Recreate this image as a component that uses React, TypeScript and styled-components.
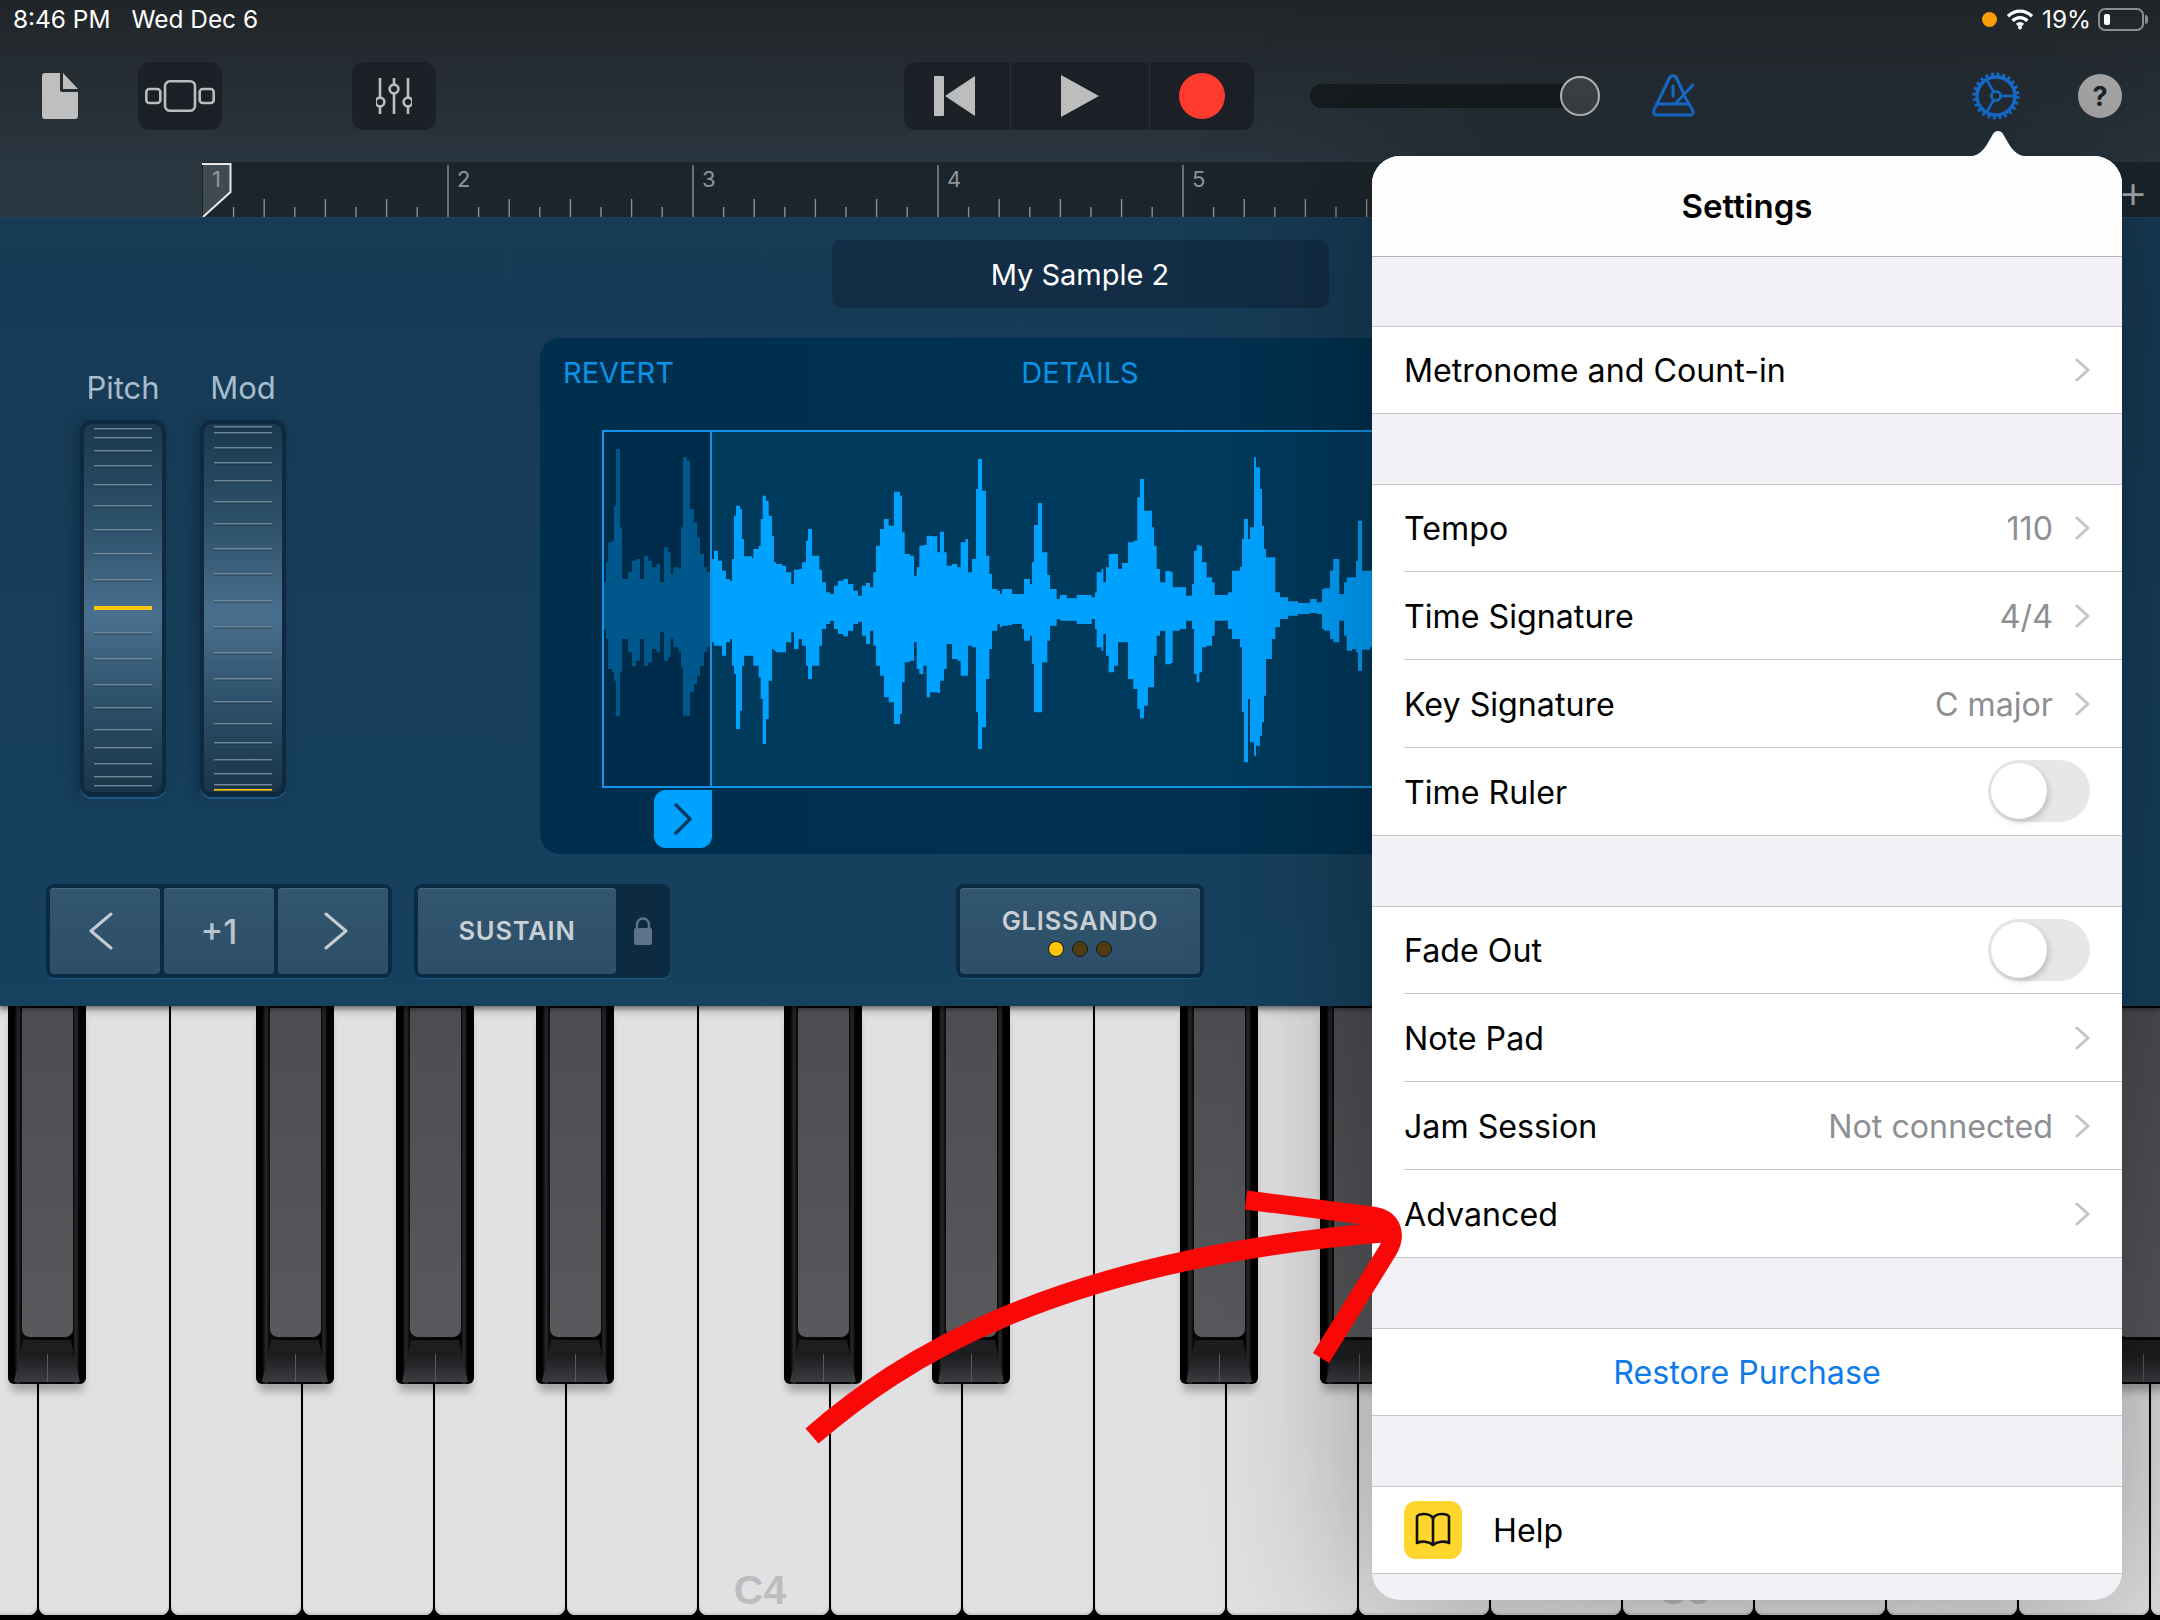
import React from 'react';
import styled, { createGlobalStyle } from 'styled-components';

const SF = `Inter, "Liberation Sans", sans-serif`;

const GlobalStyle = createGlobalStyle`
  html, body { margin: 0; padding: 0; background: #000; }
  body { font-family: ${SF}; }
  * { box-sizing: border-box; }
`;

/* ---------- data ---------- */

// wave outline traced from the screenshot: x, top, bottom (3 units per pixel)
const WAVE: [number, number, number][] = [
  [12,430,570],[18,370,600],[24,310,690],[36,305,700],[42,200,725],[48,30,832],[60,265,700],[66,420,600],[84,400,640],[96,365,682],
  [108,360,665],[120,420,600],[132,350,680],[144,365,670],[156,385,630],[170,375,640],[180,430,580],[192,325,665],[204,340,655],[212,405,600],
  [220,385,625],[236,388,640],[243,265,685],[249,55,830],[261,65,830],[270,210,760],[282,250,735],[291,295,710],[300,345,680],[312,385,640],
  [320,398,625],[330,398,610],[336,360,610],[342,335,620],[354,365,620],[366,395,650],[378,420,610],[390,425,600],[396,360,680],[402,230,705],
  [408,200,870],[420,210,815],[426,300,680],[432,352,650],[456,358,650],[460,330,680],[476,320,715],[482,240,780],[488,170,915],[498,185,840],
  [506,230,725],[516,290,630],[522,370,635],[528,375,640],[546,380,640],[558,400,610],[574,435,580],[582,392,630],[596,390,600],[606,370,620],
  [618,305,680],[624,270,720],[636,350,680],[642,350,680],[658,392,620],[666,430,570],[678,460,555],[690,465,545],[702,440,570],[714,425,585],
  [730,420,592],[744,435,575],[760,455,555],[774,470,548],[786,440,590],[798,432,615],[810,445,575],[820,400,620],[828,320,680],[840,270,710],
  [852,240,775],[866,260,790],[882,158,855],[900,170,825],[906,280,730],[914,345,670],[930,350,665],[942,410,610],[950,385,690],[958,320,705],
  [970,318,680],[980,290,775],[990,292,760],[1012,340,762],[1020,278,725],[1032,340,690],[1040,380,615],[1056,375,660],[1072,385,665],[1082,310,710],
  [1096,300,710],[1104,400,620],[1116,360,625],[1128,150,820],[1134,60,930],[1146,155,865],[1158,350,720],[1168,405,630],[1176,450,575],[1192,455,555],
  [1200,465,565],[1206,450,560],[1224,450,558],[1236,465,555],[1266,465,570],[1272,420,605],[1290,435,590],[1296,370,675],[1302,258,820],[1314,192,820],
  [1326,340,670],[1342,408,605],[1350,450,560],[1370,480,540],[1380,468,545],[1400,478,545],[1430,468,555],[1475,475,540],[1485,460,570],[1490,400,625],
  [1504,390,635],[1510,430,585],[1518,385,650],[1526,345,700],[1542,345,680],[1554,390,610],[1566,372,610],[1584,310,720],[1600,305,750],[1612,175,810],
  [1620,120,838],[1632,215,800],[1644,215,745],[1656,265,745],[1662,320,650],[1670,390,590],[1680,430,575],[1696,396,676],[1712,400,672],[1718,445,575],
  [1740,445,570],[1758,470,545],[1776,435,570],[1782,335,705],[1790,318,730],[1798,320,700],[1806,370,625],[1820,415,620],[1836,430,590],[1844,468,545],
  [1866,468,545],[1884,460,570],[1896,395,600],[1920,383,625],[1926,300,820],[1932,240,970],[1944,300,780],[1950,265,910],[1962,55,950],[1968,85,920],
  [1980,150,890],[1986,260,850],[1992,330,770],[1998,355,660],[2016,355,600],[2026,460,565],[2040,475,540],[2064,487,530],[2094,492,525],[2130,480,522],
  [2150,490,525],[2166,450,570],[2172,448,575],[2190,395,600],[2200,360,610],[2212,360,610],[2218,465,545],[2232,430,590],[2240,415,635],[2256,415,630],
  [2268,365,640],[2274,245,695],[2286,395,632],[2310,395,625],[2316,395,625],
];

const PITCH_TICKS = [9, 18, 31, 46, 65, 86, 110, 134, 160, 213, 239, 265, 288, 310, 328, 344, 357, 366];
const MOD_TICKS = [7, 13, 28, 43, 61, 82, 104, 129, 154, 181, 207, 233, 259, 282, 304, 323, 340, 354, 365];

const WHITE_KEYS = Array.from({ length: 18 }, (_, i) => i);
const KEY_LABELS: Record<number, string> = { 6: 'C4', 13: 'C5' };
const BLACK_KEYS = [8, 256, 396, 536, 784, 932, 1180, 1320, 1460, 1708, 1856, 2104];

const BARS = ['1', '2', '3', '4', '5', ''];
const BAR_TICKS = [1, 2, 3, 4, 5, 6, 7];

const wavePath = (from: number, to: number) =>
  WAVE.slice(0, -1)
    .map(([x, top, bottom], i) => {
      const next = WAVE[i + 1][0];
      if (next <= from || x >= to) return '';
      const x0 = Math.max(x, from) / 3 - 4;
      const x1 = Math.min(next, to) / 3 - 4;
      return `M${x0} ${top / 3 + 7}H${x1}V${bottom / 3 + 7}H${x0}Z`;
    })
    .join('');

/* ---------- page frame ---------- */

const Page = styled.div`
  position: relative;
  width: 2160px;
  height: 1620px;
  overflow: hidden;
  background: #000;
`;

const Header = styled.header`
  height: 162px;
  background: linear-gradient(#212528, #29353f);
`;

const StatusBar = styled.div`
  height: 38px;
  padding: 0 16px 0 13px;
  display: flex;
  align-items: center;
  color: #fff;
  font-size: 24.4px;
  font-weight: 400;
`;

const StatusDate = styled.span`
  margin-left: 21px;
`;

const StatusRight = styled.div`
  margin-left: auto;
  display: flex;
  align-items: center;
`;

const OrangeDot = styled.span`
  width: 15px;
  height: 15px;
  border-radius: 50%;
  background: #ff9f0a;
  margin-right: 9px;
`;

const BatteryPct = styled.span`
  margin: 0 7px 0 8px;
`;

const Battery = styled.span`
  position: relative;
  width: 46px;
  height: 23px;
  padding: 4px;
  border: 2px solid #8b8f92;
  border-radius: 7px;
  display: block;

  &::before {
    content: '';
    display: block;
    width: 6px;
    height: 100%;
    border-radius: 2px;
    background: #fff;
  }
  &::after {
    content: '';
    position: absolute;
    right: -6px;
    top: 5px;
    width: 3px;
    height: 9px;
    border-radius: 0 3px 3px 0;
    background: #8b8f92;
  }
`;

/* ---------- toolbar ---------- */

const Toolbar = styled.div`
  margin-top: 24px;
  height: 68px;
  padding-left: 42px;
  display: flex;
  align-items: center;
`;

const ToolButton = styled.div<{ $ml: number }>`
  width: 84px;
  height: 68px;
  margin-left: ${p => p.$ml}px;
  border-radius: 12px;
  background: #1b2126;
  display: flex;
  align-items: center;
  justify-content: center;
`;

const Transport = styled.div`
  margin-left: 468px;
  height: 68px;
  border-radius: 12px;
  background: #1b2126;
  display: flex;
`;

const TransportCell = styled.div<{ $w: number; $pr?: number }>`
  width: ${p => p.$w}px;
  padding-right: ${p => p.$pr ?? 0}px;
  display: flex;
  align-items: center;
  justify-content: center;
  & + & {
    border-left: 1px solid #2b3137;
  }
`;

const RecordDot = styled.span`
  width: 46px;
  height: 46px;
  border-radius: 50%;
  background: #ff3b30;
`;

const Volume = styled.div`
  margin-left: 56px;
  display: flex;
  align-items: center;
`;

const VolumeTrack = styled.div`
  width: 265px;
  height: 24px;
  border-radius: 12px 0 0 12px;
  background: #151b1e;
`;

const VolumeKnob = styled.div`
  width: 40px;
  height: 40px;
  margin-left: -15px;
  border-radius: 50%;
  border: 2px solid #bdbfc0;
  background: #3d4447;
`;

const IconSlot = styled.div<{ $ml: number }>`
  margin-left: ${p => p.$ml}px;
  display: flex;
`;

const HelpBadge = styled.div`
  margin-left: 58px;
  width: 44px;
  height: 44px;
  border-radius: 50%;
  background: #a9a9a9;
  color: #1d2327;
  font-size: 27px;
  font-weight: 700;
  display: flex;
  align-items: center;
  justify-content: center;
`;

/* ---------- ruler ---------- */

const Ruler = styled.div`
  position: relative;
  height: 56px;
  display: flex;
  overflow: hidden;
  background: #1b252b;
  border-bottom: 1px solid #24465f;
`;

const RulerGutter = styled.div`
  flex: 0 0 202px;
  background: linear-gradient(#29353f, #2a3842);
`;

const Bar = styled.div`
  position: relative;
  flex: 0 0 245px;
  padding: 2px 0 0 10px;

  svg {
    position: absolute;
    left: 0;
    bottom: 0;
    display: block;
  }
`;

const BarNumber = styled.span`
  position: relative;
  z-index: 2;
  color: #8f969a;
  font-size: 22px;
  line-height: 30px;
`;

const Playhead = styled.svg`
  position: absolute;
  z-index: 1;
  left: 202px;
  top: 1px;
`;

const RulerPlus = styled.div`
  position: absolute;
  right: 12px;
  top: 4px;
  color: #a9adaf;
  font-size: 46px;
  line-height: 50px;
  font-weight: 300;
`;

/* ---------- instrument panel ---------- */

const Main = styled.main`
  position: relative;
  z-index: 1;
  height: 788px;
  padding-top: 22px;
  background: linear-gradient(#173a55, #16415f);
  box-shadow: 0 3px 5px rgba(0, 0, 0, 0.45);
`;

const NameBox = styled.div`
  width: 497px;
  height: 68px;
  margin: 0 auto;
  border-radius: 10px;
  background: #122d45;
  color: #fff;
  font-size: 29px;
  display: flex;
  align-items: center;
  justify-content: center;
`;

const MiddleRow = styled.div`
  margin-top: 30px;
  height: 516px;
  display: flex;
`;

const Controllers = styled.div`
  flex: 0 0 540px;
  padding: 32px 0 0 80px;
  display: flex;
  gap: 34px;
`;

const Controller = styled.div`
  width: 86px;
`;

const ControllerLabel = styled.div`
  height: 36px;
  margin-bottom: 14px;
  line-height: 36px;
  text-align: center;
  color: #a7bccd;
  font-size: 31px;
  white-space: nowrap;
`;

const Wheel = styled.div`
  position: relative;
  width: 86px;
  height: 377px;
  border-radius: 12px;
  border: 4px solid #0f2a40;
  border-bottom-width: 5px;
  background: linear-gradient(#1b3a50, #2d5069 26%, #4a708f 52%, #2d5069 76%, #193549);
  box-shadow: 0 2px 0 #1f5a88, -6px 0 14px rgba(8, 30, 50, 0.35);
  overflow: hidden;

  svg {
    display: block;
  }
`;

const WavePanel = styled.section`
  width: 1080px;
  height: 516px;
  border-radius: 20px;
  background: linear-gradient(90deg, #002f4e, #003250);
`;

const WaveHeader = styled.div`
  height: 68px;
  padding: 0 23px;
  display: grid;
  grid-template-columns: 1fr auto 1fr;
  align-items: center;
  color: #0b93e8;
  font-size: 29px;
`;

const WaveBox = styled.div`
  width: 1018px;
  height: 358px;
  margin: 24px 0 0 62px;
  border: 2px solid #1494e8;
  background: #003a5c;

  svg {
    display: block;
  }
`;

const WaveHandle = styled.div`
  width: 58px;
  height: 58px;
  margin: 2px 0 0 114px;
  border-radius: 12px 0 12px 12px;
  background: #00a2ff;
  display: flex;
  align-items: center;
  justify-content: center;
`;

const BottomRow = styled.div`
  margin-top: 30px;
  padding-left: 46px;
  display: flex;
`;

const ControlWell = styled.div<{ $ml?: number; $w: number }>`
  width: ${p => p.$w}px;
  height: 94px;
  margin-left: ${p => p.$ml ?? 0}px;
  padding: 4px;
  border-radius: 8px;
  background: #0c2a42;
  box-shadow: 0 1px 0 #1f5a88;
  display: flex;
  gap: 4px;
  align-items: center;
`;

const PadButton = styled.div<{ $w: number }>`
  width: ${p => p.$w}px;
  height: 86px;
  border-radius: 4px;
  background: linear-gradient(#33566f, #2c4e68);
  box-shadow: inset 0 1px 0 #49697f;
  color: #c9d0d5;
  display: flex;
  flex-direction: column;
  gap: 5px;
  align-items: center;
  justify-content: center;
`;

const StepArrow = styled.span<{ $shift: number }>`
  display: flex;
  transform: translateX(${p => p.$shift}px);
`;

const StepValue = styled.span`
  font-size: 34px;
  font-weight: 500;
  color: #b8c3cc;
`;

const PadLabel = styled.span`
  font-size: 25.5px;
  font-weight: 600;
  letter-spacing: 0.8px;
  line-height: 30px;
`;

const LockSlot = styled.div`
  flex: 1;
  display: flex;
  justify-content: center;
`;

const DotRow = styled.div`
  display: flex;
  gap: 8px;
`;

const ModeDot = styled.span<{ $on?: boolean }>`
  width: 16px;
  height: 16px;
  border-radius: 50%;
  border: 1px solid #0d1a22;
  background: ${p => (p.$on ? '#ffc60a' : '#4d3d10')};
`;

/* ---------- keyboard ---------- */

const Keyboard = styled.div`
  position: relative;
  height: 614px;
  display: flex;
  gap: 2px;
  padding-bottom: 5px;
  margin-left: -93px;
  width: 2400px;
  background: #000;
`;

const WhiteKey = styled.div`
  position: relative;
  flex: 0 0 130px;
  border-radius: 0 0 8px 8px;
  background: linear-gradient(#c9c9cb, #e1e1e3 14px);
  box-shadow: inset 0 -2px 2px #c9c9cb;
  display: flex;
  align-items: flex-end;
  justify-content: center;
`;

const KeyLabel = styled.span`
  margin: 0 0 5px -8px;
  font-family: 'Liberation Sans', sans-serif;
  font-weight: 700;
  font-size: 41px;
  line-height: 40px;
  color: #bdbdbf;
`;

const BlackKey = styled.div<{ $left: number }>`
  position: absolute;
  top: 0;
  left: ${p => p.$left + 93}px;
  width: 78px;
  height: 378px;
  padding-top: 2px;
  border-radius: 0 0 6px 6px;
  background: linear-gradient(90deg, #000 0 8%, #2a2a2b 13%, #0a0a0a 17%, #000 83%, #0a0a0a 84%, #2a2a2b 87%, #000 92%);
  box-shadow: 0 10px 8px -3px rgba(0, 0, 0, 0.28);
`;

const KeyFace = styled.div`
  width: 53px;
  height: 330px;
  margin: 0 auto;
  border: 1px solid #0c0c0c;
  border-top: 0;
  border-radius: 0 0 9px 9px;
  background: linear-gradient(#4c4d52, #58595d);
`;

const KeyFront = styled.div`
  position: relative;
  width: 66px;
  height: 42px;
  margin: 2px auto 0;
  clip-path: polygon(14% 0, 86% 0, 100% 100%, 0 100%);
  background: linear-gradient(#1d1e20 40%, #3c3d41);

  &::after {
    content: '';
    position: absolute;
    left: 50%;
    top: 14px;
    bottom: 0;
    width: 1px;
    background: #5a5a5d;
  }
`;

/* ---------- settings popover ---------- */

const Popover = styled.aside`
  position: absolute;
  z-index: 5;
  left: 1372px;
  top: 156px;
  width: 750px;
  height: 1444px;
  border-radius: 28px;
  background: #f1f1f6;
  box-shadow: 0 0 170px rgba(0, 0, 0, 0.36);
  color: #000;
`;

const PopoverBody = styled.div`
  height: 100%;
  border-radius: 28px;
  overflow: hidden;
  font-size: 32.2px;
`;

const PopoverArrow = styled.svg`
  position: absolute;
  left: 594px;
  top: -26px;
  display: block;
`;

const PopoverTitle = styled.div`
  height: 101px;
  border-bottom: 1px solid #b6b6ba;
  background: #fdfdfe;
  display: flex;
  align-items: center;
  justify-content: center;
  font-size: 33px;
  font-weight: 600;
`;

const Gap = styled.div<{ $h: number }>`
  height: ${p => p.$h}px;
`;

const Section = styled.div`
  background: #fff;
  border-top: 1px solid #c6c6c8;
`;

const Row = styled.div`
  height: 88px;
  margin-left: 32px;
  padding-right: 32px;
  border-bottom: 1px solid #c6c6c8;
  display: flex;
  align-items: center;

  &:first-child {
    height: 87px;
  }
  &:last-child {
    margin-left: 0;
    padding-left: 32px;
  }
`;

const RowTitle = styled.span`
  flex: 1;
  padding-top: 1px;
`;

const RowValue = styled.span`
  margin-right: 22px;
  padding-top: 1px;
  color: #8e8e93;
`;

const LinkRow = styled(Row)`
  justify-content: center;
  color: #0f7aea;
`;

const HelpIcon = styled.div`
  width: 58px;
  height: 58px;
  margin-right: 31px;
  border-radius: 12px;
  background: #ffd62e;
  display: flex;
  align-items: center;
  justify-content: center;
`;

const Toggle = styled.div`
  width: 102px;
  height: 62px;
  margin-top: -1px;
  padding: 3px;
  border-radius: 31px;
  background: #e7e7e9;
`;

const ToggleKnob = styled.div`
  width: 56px;
  height: 56px;
  border-radius: 50%;
  background: #fff;
  box-shadow: 2px 3px 6px rgba(0, 0, 0, 0.18);
`;

const Annotation = styled.svg`
  position: absolute;
  z-index: 6;
  left: 0;
  top: 0;
  pointer-events: none;
`;

/* ---------- small drawings ---------- */

const Chevron = ({ dir = 'right', color = '#c4c4c7', w = 15, h = 24, sw = 3 }: { dir?: 'left' | 'right'; color?: string; w?: number; h?: number; sw?: number }) => (
  <svg width={w} height={h} viewBox={`0 0 ${w} ${h}`} fill="none" stroke={color} strokeWidth={sw} strokeLinecap="round" strokeLinejoin="round">
    <path d={dir === 'right' ? `M2 2L${w - 2} ${h / 2}L2 ${h - 2}` : `M${w - 2} 2L2 ${h / 2}L${w - 2} ${h - 2}`} />
  </svg>
);

const WifiIcon = () => (
  <svg width="28" height="22" viewBox="0 0 28 22" fill="none" stroke="#fff" strokeWidth="3.4">
    <path d="M2 8.2C9 1.4 19 1.4 26 8.2" />
    <path d="M6.6 12.8C11 8.6 17 8.6 21.4 12.8" />
    <path d="M11 17C12.8 15.4 15.2 15.4 17 17" />
    <circle cx="14" cy="19.6" r="2" fill="#fff" stroke="none" />
  </svg>
);

const DocIcon = () => (
  <svg width="36" height="46" viewBox="0 0 36 46" fill="#bfbfbf">
    <path d="M3 0H18V17a2 2 0 0 0 2 2H36V43a3 3 0 0 1-3 3H3a3 3 0 0 1-3-3V3a3 3 0 0 1 3-3Z" />
    <path d="M21 0L36 16H21Z" />
  </svg>
);

const TracksIcon = () => (
  <svg width="70" height="32" viewBox="0 0 70 32" fill="none" stroke="#bbbcbd" strokeWidth="2.6">
    <rect x="1.3" y="9" width="14" height="14" rx="3" />
    <rect x="20" y="1.3" width="30" height="29.4" rx="5" />
    <rect x="54.7" y="9" width="14" height="14" rx="3" />
  </svg>
);

const MixerIcon = () => (
  <svg width="36" height="38" viewBox="0 0 36 38" fill="none" stroke="#bbbcbd" strokeWidth="2.6">
    <path d="M4 1V37M18 1V37M32 1V37" />
    <circle cx="4" cy="25" r="4.4" fill="#1b2126" />
    <circle cx="18" cy="12" r="4.4" fill="#1b2126" />
    <circle cx="32" cy="25" r="4.4" fill="#1b2126" />
  </svg>
);

const RewindIcon = () => (
  <svg width="42" height="40" viewBox="0 0 42 40" fill="#bdbdbd">
    <rect x="0" y="0" width="10" height="40" rx="1" />
    <path d="M41 0V40L11 20Z" />
  </svg>
);

const PlayIcon = () => (
  <svg width="38" height="42" viewBox="0 0 38 42" fill="#bdbdbd">
    <path d="M0 0L38 21L0 42Z" />
  </svg>
);

const MetronomeIcon = () => (
  <svg width="44" height="44" viewBox="0 0 44 44" fill="none" stroke="#1672d6" strokeWidth="3" strokeLinecap="round" strokeLinejoin="round">
    <path d="M31 18L24.5 4C23 1 19 1 17.5 4L2 36C0.8 39 2 41 5 41H38C41 41 42 39 40.5 36L33 23" />
    <path d="M4.5 30H36" />
    <path d="M23 30L41 11" />
    <path d="M21 12V22" />
  </svg>
);

const GearIcon = () => {
  const spokes = [0, 120, 240].map(a => {
    const r = (a * Math.PI) / 180;
    return `M${24 + 5 * Math.cos(r)} ${24 - 5 * Math.sin(r)}L${24 + 19 * Math.cos(r)} ${24 - 19 * Math.sin(r)}`;
  });
  return (
    <svg width="48" height="48" viewBox="0 0 48 48" fill="none" stroke="#1672d6">
      <circle cx="24" cy="24" r="19" strokeWidth="3.4" />
      <circle cx="24" cy="24" r="21.5" strokeWidth="4" strokeDasharray="2.8 2.83" />
      <circle cx="24" cy="24" r="4.6" strokeWidth="2.6" />
      {spokes.map(d => (
        <path key={d} d={d} strokeWidth="2.6" />
      ))}
    </svg>
  );
};

const LockIcon = () => (
  <svg width="20" height="28" viewBox="0 0 20 28" fill="#5d7488">
    <rect x="1" y="11" width="18" height="17" rx="2" />
    <path d="M4 12V7.5a6 6 0 0 1 12 0V12" fill="none" stroke="#5d7488" strokeWidth="2.4" />
  </svg>
);

const BookIcon = () => (
  <svg width="38" height="36" viewBox="0 0 38 36" fill="none" stroke="#111" strokeWidth="2.6" strokeLinejoin="round" strokeLinecap="round">
    <path d="M19 8C19 4 15 2 10 2C7 2 4 3 3 4.5V31C7 29 15 29 19 33C23 29 31 29 35 31V4.5C34 3 31 2 28 2C23 2 19 4 19 8V33" />
  </svg>
);

const TickWheel = ({ ticks, mark, thin }: { ticks: number[]; mark: number; thin?: boolean }) => (
  <svg width="78" height="368" viewBox="0 0 78 368">
    <g transform="translate(0 -4)">
      {ticks.map(y => (
        <g key={y}>
          <rect x="10" y={y - 1} width="58" height="1.6" fill="#6f8899" />
          <rect x="10" y={y + 0.6} width="58" height="1" fill="#16303f" opacity="0.6" />
        </g>
      ))}
      <rect x="10" y={mark - 2} width="58" height={thin ? 1.6 : 4} fill="#ffc60a" />
    </g>
  </svg>
);

const ToggleOff = () => (
  <Toggle>
    <ToggleKnob />
  </Toggle>
);

const SettingRow = ({ title, value }: { title: string; value?: string }) => (
  <Row>
    <RowTitle>{title}</RowTitle>
    {value && <RowValue>{value}</RowValue>}
    <Chevron />
  </Row>
);

export default function App() {
  return (
    <Page>
      <GlobalStyle />
      <Header>
        <StatusBar>
          <span>8:46 PM</span>
          <StatusDate>Wed Dec 6</StatusDate>
          <StatusRight>
            <OrangeDot />
            <WifiIcon />
            <BatteryPct>19%</BatteryPct>
            <Battery />
          </StatusRight>
        </StatusBar>
        <Toolbar>
          <DocIcon />
          <ToolButton $ml={60}>
            <TracksIcon />
          </ToolButton>
          <ToolButton $ml={130}>
            <MixerIcon />
          </ToolButton>
          <Transport>
            <TransportCell $w={106} $pr={5}>
              <RewindIcon />
            </TransportCell>
            <TransportCell $w={139}>
              <PlayIcon />
            </TransportCell>
            <TransportCell $w={105}>
              <RecordDot />
            </TransportCell>
          </Transport>
          <Volume>
            <VolumeTrack />
            <VolumeKnob />
          </Volume>
          <IconSlot $ml={52}>
            <MetronomeIcon />
          </IconSlot>
          <IconSlot $ml={276}>
            <GearIcon />
          </IconSlot>
          <HelpBadge>?</HelpBadge>
        </Toolbar>
      </Header>

      <Ruler>
        <RulerGutter />
        {BARS.map((n, i) => (
          <Bar key={i}>
            {n && <BarNumber>{n}</BarNumber>}
            <svg width="245" height="52" viewBox="0 0 245 52" stroke="#8a9195" strokeWidth="1.4">
              {i > 0 && <path d="M1 0V52" />}
              {BAR_TICKS.map(t => {
                const x = 1 + t * 30.6;
                return <path key={t} d={`M${x} ${t % 2 ? 42 : 34}V52`} />;
              })}
            </svg>
          </Bar>
        ))}
        <Playhead width="30" height="55" viewBox="0 0 30 55">
          <path d="M1 1H28.5V29L1 54Z" fill="#3f4b51" />
          <path d="M0 1H28.5V29L1 54" fill="none" stroke="#e8e8e8" strokeWidth="2" />
        </Playhead>
        <RulerPlus>+</RulerPlus>
      </Ruler>

      <Main>
        <NameBox>My Sample 2</NameBox>
        <MiddleRow>
          <Controllers>
            <Controller>
              <ControllerLabel>Pitch</ControllerLabel>
              <Wheel>
                <TickWheel ticks={PITCH_TICKS} mark={188} />
              </Wheel>
            </Controller>
            <Controller>
              <ControllerLabel>Mod</ControllerLabel>
              <Wheel>
                <TickWheel ticks={MOD_TICKS} mark={371} thin />
              </Wheel>
            </Controller>
          </Controllers>
          <WavePanel>
            <WaveHeader>
              <span>REVERT</span>
              <span>DETAILS</span>
            </WaveHeader>
            <WaveBox>
              <svg width="1014" height="354" viewBox="0 0 1014 354">
                <rect x="0" y="0" width="106" height="354" fill="#002c4c" />
                <path d={wavePath(0, 330)} fill="#00578b" />
                <path d={wavePath(330, 3000)} fill="#00a2ff" />
                <rect x="106" y="0" width="2" height="354" fill="#1494e8" />
              </svg>
            </WaveBox>
            <WaveHandle>
              <Chevron color="#0b3a60" w={18} h={32} sw={3.4} />
            </WaveHandle>
          </WavePanel>
        </MiddleRow>
        <BottomRow>
          <ControlWell $w={346}>
            <PadButton $w={110}>
              <StepArrow $shift={-4}>
                <Chevron dir="left" color="#c4ccd2" w={24} h={38} />
              </StepArrow>
            </PadButton>
            <PadButton $w={110}>
              <StepValue>+1</StepValue>
            </PadButton>
            <PadButton $w={110}>
              <StepArrow $shift={3}>
                <Chevron color="#c4ccd2" w={24} h={38} />
              </StepArrow>
            </PadButton>
          </ControlWell>
          <ControlWell $ml={22} $w={256}>
            <PadButton $w={198}>
              <PadLabel>SUSTAIN</PadLabel>
            </PadButton>
            <LockSlot>
              <LockIcon />
            </LockSlot>
          </ControlWell>
          <ControlWell $ml={286} $w={248}>
            <PadButton $w={240}>
              <PadLabel>GLISSANDO</PadLabel>
              <DotRow>
                <ModeDot $on />
                <ModeDot />
                <ModeDot />
              </DotRow>
            </PadButton>
          </ControlWell>
        </BottomRow>
      </Main>

      <Keyboard>
        {WHITE_KEYS.map(i => (
          <WhiteKey key={i}>{KEY_LABELS[i] && <KeyLabel>{KEY_LABELS[i]}</KeyLabel>}</WhiteKey>
        ))}
        {BLACK_KEYS.map(left => (
          <BlackKey key={left} $left={left}>
            <KeyFace />
            <KeyFront />
          </BlackKey>
        ))}
      </Keyboard>

      <Popover>
        <PopoverArrow width="64" height="27" viewBox="0 0 64 27" fill="#fdfdfe">
          <path d="M0 27C10 26 14 24 20 16L27 4C29 0 35 0 37 4L44 16C50 24 54 26 64 27Z" />
        </PopoverArrow>
        <PopoverBody>
          <PopoverTitle>Settings</PopoverTitle>
          <Gap $h={69} />
          <Section>
            <SettingRow title="Metronome and Count-in" />
          </Section>
          <Gap $h={70} />
          <Section>
            <SettingRow title="Tempo" value="110" />
            <SettingRow title="Time Signature" value="4/4" />
            <SettingRow title="Key Signature" value="C major" />
            <Row>
              <RowTitle>Time Ruler</RowTitle>
              <ToggleOff />
            </Row>
          </Section>
          <Gap $h={70} />
          <Section>
            <Row>
              <RowTitle>Fade Out</RowTitle>
              <ToggleOff />
            </Row>
            <SettingRow title="Note Pad" />
            <SettingRow title="Jam Session" value="Not connected" />
            <SettingRow title="Advanced" />
          </Section>
          <Gap $h={70} />
          <Section>
            <LinkRow>Restore Purchase</LinkRow>
          </Section>
          <Gap $h={70} />
          <Section>
            <Row>
              <HelpIcon>
                <BookIcon />
              </HelpIcon>
              <RowTitle>Help</RowTitle>
            </Row>
          </Section>
        </PopoverBody>
      </Popover>

      <Annotation width="2160" height="1620" viewBox="0 0 2160 1620" fill="none" stroke="#f90808" strokeWidth="20">
        <path d="M812 1436C900 1360 1050 1260 1388 1232" />
        <path strokeWidth="19" d="M1246 1200L1372 1216C1394 1219 1396 1236 1388 1250L1321 1358" />
      </Annotation>
    </Page>
  );
}
